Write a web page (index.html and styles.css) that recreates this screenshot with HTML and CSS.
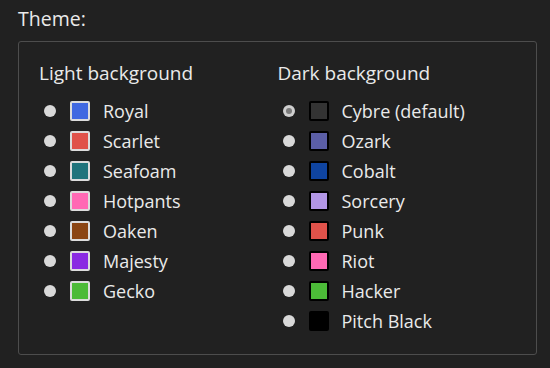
FILE: index.html
```html
<!DOCTYPE html>
<html lang="en">
<head>
  <meta charset="UTF-8">
  <title>Theme</title>
  <link rel="stylesheet" href="styles.css">
</head>
<body>

<div class="settings">
  <div class="setting-label">Theme:</div>
  <div class="theme-box">
    <div class="theme-col">
      <div class="col-title">Light background</div>
      <label class="theme-row"><span class="radio"></span><span class="swatch light" style="background:#4169e1"></span>Royal</label>
      <label class="theme-row"><span class="radio"></span><span class="swatch light" style="background:#e0524a"></span>Scarlet</label>
      <label class="theme-row"><span class="radio"></span><span class="swatch light" style="background:#20747c"></span>Seafoam</label>
      <label class="theme-row"><span class="radio"></span><span class="swatch light" style="background:#ff69b4"></span>Hotpants</label>
      <label class="theme-row"><span class="radio"></span><span class="swatch light" style="background:#8b4513"></span>Oaken</label>
      <label class="theme-row"><span class="radio"></span><span class="swatch light" style="background:#8a2be2"></span>Majesty</label>
      <label class="theme-row"><span class="radio"></span><span class="swatch light" style="background:#4cbb38"></span>Gecko</label>
    </div>
    <div class="theme-col">
      <div class="col-title">Dark background</div>
      <label class="theme-row"><span class="radio checked"></span><span class="swatch dark" style="background:#333333"></span>Cybre (default)</label>
      <label class="theme-row"><span class="radio"></span><span class="swatch dark" style="background:#5b5ea6"></span>Ozark</label>
      <label class="theme-row"><span class="radio"></span><span class="swatch dark" style="background:#0f44a0"></span>Cobalt</label>
      <label class="theme-row"><span class="radio"></span><span class="swatch dark" style="background:#b296e6"></span>Sorcery</label>
      <label class="theme-row"><span class="radio"></span><span class="swatch dark" style="background:#e0524a"></span>Punk</label>
      <label class="theme-row"><span class="radio"></span><span class="swatch dark" style="background:#ff69b4"></span>Riot</label>
      <label class="theme-row"><span class="radio"></span><span class="swatch dark" style="background:#4cbb38"></span>Hacker</label>
      <label class="theme-row"><span class="radio"></span><span class="swatch dark" style="background:#000000"></span>Pitch Black</label>
    </div>
  </div>
</div>

</body>
</html>
```

FILE: styles.css
```css
body {
  margin: 0;
  background: #212121;
  color: #eaeaea;
  font-family: "Open Sans", sans-serif;
  font-size: 18px;
}

.settings {
  padding: 7px 13px 0 18px;
}

.setting-label {
  font-size: 19.5px;
  line-height: 24px;
  height: 24px;
  margin-bottom: 10px;
}

.theme-box {
  box-sizing: border-box;
  border: 1px solid #4d4d4d;
  border-radius: 3px;
  height: 314px;
  padding: 19px 20px 0 20px;
  display: flex;
}

.theme-col {
  width: 239px;
}

.col-title {
  font-size: 19px;
  line-height: 24px;
  margin-bottom: 11px;
}

.theme-row {
  display: flex;
  align-items: center;
  height: 30px;
  padding-left: 5px;
}

.radio {
  width: 12px;
  height: 12px;
  border-radius: 50%;
  background: #d9d9d9;
  margin-right: 14px;
  position: relative;
}

.radio.checked {
  background: #cfcfcf;
}

.radio.checked::after {
  content: "";
  position: absolute;
  left: 3px;
  top: 3px;
  width: 6px;
  height: 6px;
  border-radius: 50%;
  background: #7a7a7a;
}

.swatch {
  width: 16px;
  height: 16px;
  border-radius: 2px;
  margin-right: 13px;
}

.swatch.light {
  border: 2px solid #dcdcdc;
}

.swatch.dark {
  border: 2px solid #000;
}
```
